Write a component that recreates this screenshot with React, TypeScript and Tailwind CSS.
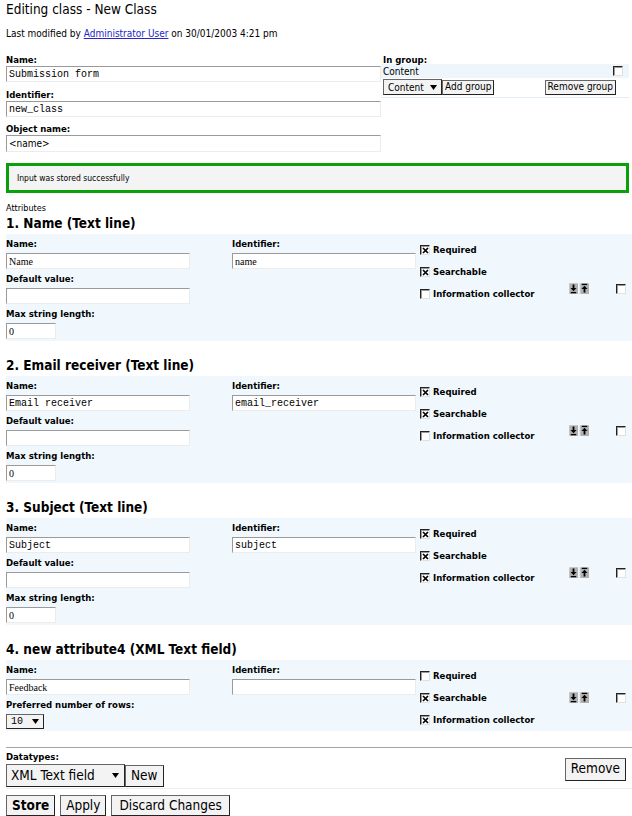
import React from "react";

type Attr = {
  title: string;
  name: string;
  nameFont: string;
  ident: string;
  identFont: string;
  required: boolean;
  searchable: boolean;
  info: boolean;
  xml?: boolean;
};

const MONO = "font-['Liberation_Mono',monospace]";
const SERIF = "font-['Liberation_Serif',serif]";
const SANS = "font-['DejaVu_Sans_Condensed','Liberation_Sans',sans-serif]";

const attributes: Attr[] = [
  { title: "1. Name (Text line)", name: "Name", nameFont: SERIF, ident: "name", identFont: SERIF, required: true, searchable: true, info: false },
  { title: "2. Email receiver (Text line)", name: "Email receiver", nameFont: MONO, ident: "email_receiver", identFont: MONO, required: true, searchable: true, info: false },
  { title: "3. Subject (Text line)", name: "Subject", nameFont: MONO, ident: "subject", identFont: MONO, required: true, searchable: true, info: true },
  { title: "4. new attribute4 (XML Text field)", name: "Feedback", nameFont: SERIF, ident: "", identFont: MONO, required: false, searchable: true, info: true, xml: true },
];

function Label({ children, className = "" }: { children: React.ReactNode; className?: string }) {
  return <div className={`text-[9.5px] font-bold leading-[12px] ${className}`}>{children}</div>;
}

function Field({ value = "", className = "", font = MONO }: { value?: string; className?: string; font?: string }) {
  return (
    <input
      readOnly
      value={value}
      className={`block h-[16px] border border-[#ececec] border-t-[#9a9a9a] border-l-[#9a9a9a] bg-white px-[2px] text-[10px] text-black outline-none ${font} ${className}`}
    />
  );
}

function Checkbox({ checked }: { checked?: boolean }) {
  return (
    <span className="flex h-[10px] w-[10px] shrink-0 items-center justify-center border border-[#e0e0e0] border-t-[#222] border-l-[#222] bg-white shadow-[inset_1px_1px_0_#9a9a9a]">
      {checked && (
        <svg width="7" height="7" viewBox="0 0 7 7">
          <path d="M1 1 6 6M6 1 1 6" stroke="#000" strokeWidth="1.7" />
        </svg>
      )}
    </span>
  );
}

function MoveArrows() {
  return (
    <svg width="20" height="11" viewBox="0 0 20 11">
      <rect x="0" y="0" width="9" height="11" fill="#b0b0b0" />
      <path d="M0 0h9M0 0v11" stroke="#dcdcdc" strokeWidth="1" />
      <path d="M4.5 1.5v4" stroke="#000" strokeWidth="1.8" />
      <path d="M1.5 5h6L4.5 8.3z" fill="#000" />
      <path d="M1.8 9.6h5.4" stroke="#000" strokeWidth="1.3" />
      <rect x="11" y="0" width="9" height="11" fill="#b0b0b0" />
      <path d="M11 0h9M11 0v11" stroke="#dcdcdc" strokeWidth="1" />
      <path d="M15.5 9.5v-4" stroke="#000" strokeWidth="1.8" />
      <path d="M12.5 6h6L15.5 2.7z" fill="#000" />
      <path d="M12.8 1.4h5.4" stroke="#000" strokeWidth="1.3" />
    </svg>
  );
}

function Btn({ children, className = "" }: { children: React.ReactNode; className?: string }) {
  return (
    <button className={`border border-[#666] border-r-[#222] border-b-[#222] bg-[#f3f3f3] text-black ${className}`}>
      {children}
    </button>
  );
}

function AttributeBlock({ a, first }: { a: Attr; first: boolean }) {
  return (
    <section>
      <h2 className={`${first ? "mt-[1px]" : "mt-[16px]"} mb-[3px] text-[13.5px] font-bold leading-[16px]`}>{a.title}</h2>
      <div className={`-mr-[3px] flex bg-[#f1f8fd] pt-[4px] ${a.xml ? "pb-0" : "pb-[2px]"}`}>
        <div className="w-[410px] shrink-0">
          <div className="flex">
            <div className="w-[226px]">
              <Label>Name:</Label>
              <Field value={a.name} font={a.nameFont} className="mt-[3px] w-[184px]" />
            </div>
            <div>
              <Label>Identifier:</Label>
              <Field value={a.ident} font={a.identFont} className="mt-[3px] w-[184px]" />
            </div>
          </div>
          {a.xml ? (
            <div className="mt-[4px]">
              <Label>Preferred number of rows:</Label>
              <div className="mt-[3px] flex h-[15px] w-[38px] items-center justify-between border border-[#666] border-r-[#222] border-b-[#222] bg-[#f3f3f3] pl-[4px] pr-[4px]">
                <span className={`${MONO} text-[10px] leading-none`}>10</span>
                <svg width="7" height="5" viewBox="0 0 7 5"><path d="M0 0h7L3.5 5z" fill="#000" /></svg>
              </div>
            </div>
          ) : (
            <>
              <div className="mt-[4px]">
                <Label>Default value:</Label>
                <Field className="mt-[3px] w-[184px]" />
              </div>
              <div className="mt-[4px]">
                <Label>Max string length:</Label>
                <Field value="0" font={SERIF} className="mt-[3px] w-[50px]" />
              </div>
            </>
          )}
        </div>
        <div className="mt-[1px] ml-[4px] w-[149px] text-[9.5px] font-bold">
          {[
            ["Required", a.required],
            ["Searchable", a.searchable],
            ["Information collector", a.info],
          ].map(([label, on]) => (
            <div key={label as string} className="flex h-[22px] items-center gap-[3px]">
              <Checkbox checked={on as boolean} />
              <span>{label as string}</span>
            </div>
          ))}
        </div>
        <div className="flex self-center">
          <MoveArrows />
        </div>
        <div className="ml-[27px] flex self-center">
          <Checkbox />
        </div>
      </div>
    </section>
  );
}

export default function App() {
  return (
    <div className={`${SANS} min-h-[816px] w-[632px] overflow-hidden bg-white pl-[6px] pr-[3px] text-black`}>
      <h1 className="text-[13.5px] leading-[18px]">Editing class - New Class</h1>
      <p className="mt-[10px] text-[10px] leading-[12px]">
        Last modified by <a className="text-[#2525c8] underline">Administrator User</a> on 30/01/2003 4:21 pm
      </p>

      <div className="mt-[13px] flex">
        <div className="w-[375px] shrink-0">
          <Label className="leading-[13px]">Name:</Label>
          <Field value="Submission form" className="w-full" />
          <Label className="mt-[6px] leading-[13px]">Identifier:</Label>
          <Field value="new_class" className="w-full" />
          <Label className="mt-[5px] leading-[13px]">Object name:</Label>
          <Field value="<name>" font={SANS} className="h-[17px] w-full" />
        </div>
        <div className="flex-1">
          <Label className="ml-[2px] h-[11px] leading-[13px]">In group:</Label>
          <div className="flex h-[14px] items-center justify-between bg-[#eef5fb] pl-[2px] pr-[6px] text-[10px]">
            <span>Content</span>
            <Checkbox />
          </div>
          <div className="mt-[1px] flex items-center justify-between pl-[2px] pr-[13px] text-[10px]">
            <div className="flex items-center">
              <div className="flex h-[16px] w-[59px] items-center justify-between border border-[#666] border-r-[#222] border-b-[#222] bg-[#f3f3f3] px-[4px]">
                <span>Content</span>
                <svg width="7" height="5" viewBox="0 0 7 5"><path d="M0 0h7L3.5 5z" fill="#000" /></svg>
              </div>
              <Btn className="h-[15px] px-[2px] leading-none">Add group</Btn>
            </div>
            <Btn className="h-[15px] px-[2px] leading-none">Remove group</Btn>
          </div>
          <div className="mt-[2px] h-px bg-[#e4eef8]" />
        </div>
      </div>

      <div className="mt-[11px] border-[3px] border-[#0aa00a] bg-[#f4f4f4] py-[7px] pl-[8px] text-[8.5px] leading-[10px]">
        Input was stored successfully
      </div>

      <div className="mt-[9px] text-[9px] leading-[12px]">Attributes</div>

      {attributes.map((a, i) => (
        <AttributeBlock key={a.title} a={a} first={i === 0} />
      ))}

      <div className="-mr-[3px] mt-[16px] h-px bg-[#a3a3a3]" />

      <div className="mt-[3px] flex items-center justify-between">
        <div>
          <Label>Datatypes:</Label>
          <div className="mt-[1px] flex items-end">
            <div className="flex h-[23px] w-[119px] items-center justify-between border border-[#666] border-r-[#222] border-b-[#222] bg-[#f3f3f3] pl-[4px] pr-[5px] text-[13.5px]">
              <span>XML Text field</span>
              <svg width="7" height="5" viewBox="0 0 7 5"><path d="M0 0h7L3.5 5z" fill="#000" /></svg>
            </div>
            <Btn className="h-[22px] px-[5px] text-[13.5px] leading-none">New</Btn>
          </div>
        </div>
        <Btn className="mr-[3px] h-[23px] px-[5px] text-[13.5px] leading-none">Remove</Btn>
      </div>

      <div className="-mr-[3px] mt-[1px] h-px bg-[#e6eef6]" />

      <div className="mt-[6px] flex gap-[5px]">
        <Btn className="h-[21px] px-[5px] text-[13.5px] font-bold leading-none">Store</Btn>
        <Btn className="h-[21px] px-[5px] text-[13.5px] leading-none">Apply</Btn>
        <Btn className="h-[21px] px-[7px] text-[13.5px] leading-none">Discard Changes</Btn>
      </div>
    </div>
  );
}
